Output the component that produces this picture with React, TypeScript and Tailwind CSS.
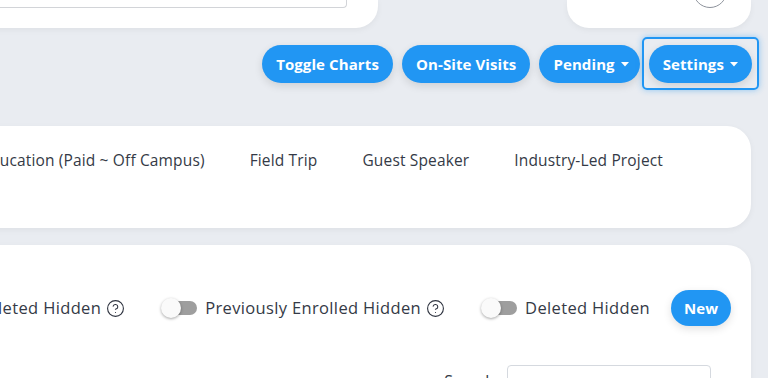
import { CircleHelp } from "lucide-react";

function Caret() {
  return (
    <svg width="8" height="5" viewBox="0 0 8 5" className="ml-[6px]">
      <path d="M0 0h8L4 4.5z" fill="currentColor" />
    </svg>
  );
}

function PillButton({ label, caret = false, wide = false }: { label: string; caret?: boolean; wide?: boolean }) {
  return (
    <button
      className={`flex h-[38px] items-center rounded-full bg-[#2196f3] pl-[14px] text-[15px] font-bold leading-none tracking-[0.1px] text-white shadow-[0_3px_8px_rgba(0,0,0,0.12)] ${
        caret && !wide ? "pr-[11px]" : "pr-[14px]"
      }`}
    >
      {label}
      {caret && <Caret />}
    </button>
  );
}

function Switch() {
  return (
    <span className="relative flex h-[20px] w-[36px] items-center">
      <span className="ml-[2px] h-[14px] w-[34px] rounded-full bg-[#9e9e9e]" />
      <span className="absolute left-0 top-0 h-[20px] w-[20px] rounded-full bg-[#fafafa] shadow-[0_1px_3px_rgba(0,0,0,0.35)]" />
    </span>
  );
}

function Help() {
  return <CircleHelp size={19} strokeWidth={1.4} className="text-[#2f3440]" />;
}

const tabs = [
  "Work-Based Education (Paid ~ Off Campus)",
  "Field Trip",
  "Guest Speaker",
  "Industry-Led Project",
];

export default function App() {
  return (
    <div className="h-[378px] w-[768px] overflow-hidden bg-[#e9ecf1] font-['Open_Sans',sans-serif] text-[#343a46]">
      {/* top cards */}
      <div className="flex h-[28px] items-end">
        <div className="-ml-[40px] flex h-full w-[418px] items-start justify-end rounded-br-[22px] bg-white pr-[31px] shadow-[0_2px_6px_rgba(0,0,0,0.05)]">
          <div className="h-[8px] w-[360px] rounded-br-[4px] border-b border-r border-[#d2d4d8]" />
        </div>
        <div className="ml-[189px] flex h-full w-[184px] justify-end overflow-hidden rounded-b-[22px] bg-white pr-[24px] shadow-[0_2px_6px_rgba(0,0,0,0.05)]">
          <div className="-mt-[26px] h-[34px] w-[34px] rounded-full border border-[#8d929b]" />
        </div>
      </div>

      {/* action buttons */}
      <div className="mt-[17px] flex justify-end gap-[9px] pr-[16px]">
        <PillButton label="Toggle Charts" />
        <PillButton label="On-Site Visits" />
        <PillButton label="Pending" caret />
        <div className="relative">
          <PillButton label="Settings" caret wide />
          <span className="pointer-events-none absolute -bottom-[7px] -left-[7px] -right-[7px] -top-[8px] rounded-[5px] border-2 border-[#2196f3] shadow-[0_0_6px_rgba(33,150,243,0.45)]" />
        </div>
      </div>

      {/* tabs card */}
      <div className="-ml-[40px] mr-[17px] mt-[43px] flex h-[102px] justify-end overflow-hidden rounded-[24px] bg-white pr-[88px] pt-[23px] shadow-[0_2px_6px_rgba(0,0,0,0.05)]">
        <div className="flex h-[22px] gap-[45px] whitespace-nowrap text-[15.5px] tracking-[0.15px]">
          {tabs.map((t) => (
            <span key={t}>{t}</span>
          ))}
        </div>
      </div>

      {/* list card */}
      <div className="-ml-[40px] mr-[17px] mt-[17px] h-[160px] rounded-t-[24px] bg-white pr-[20px] shadow-[0_2px_6px_rgba(0,0,0,0.05)]">
        <div className="flex h-[133px] flex-col items-end justify-start pt-[45px]">
          <div className="flex items-center whitespace-nowrap text-[16.5px] tracking-[0.35px]">
            <span>Previously Deleted Hidden</span>
            <span className="ml-[5px]"><Help /></span>
            <span className="ml-[36px]"><Switch /></span>
            <span className="ml-[8px]">Previously Enrolled Hidden</span>
            <span className="ml-[5px]"><Help /></span>
            <span className="ml-[36px]"><Switch /></span>
            <span className="ml-[8px]">Deleted Hidden</span>
            <button className="ml-[21px] h-[36px] rounded-full bg-[#2196f3] px-[13px] text-[15px] font-bold tracking-normal text-white shadow-[0_3px_8px_rgba(0,0,0,0.12)]">
              New
            </button>
          </div>
          <div className="mt-[39px] flex items-start pr-[20px]">
            <span className="mr-[12px] mt-[4px] text-[16px]">Search</span>
            <div className="h-[34px] w-[204px] rounded-[4px] border border-[#d5d9df]" />
          </div>
        </div>
      </div>
    </div>
  );
}
